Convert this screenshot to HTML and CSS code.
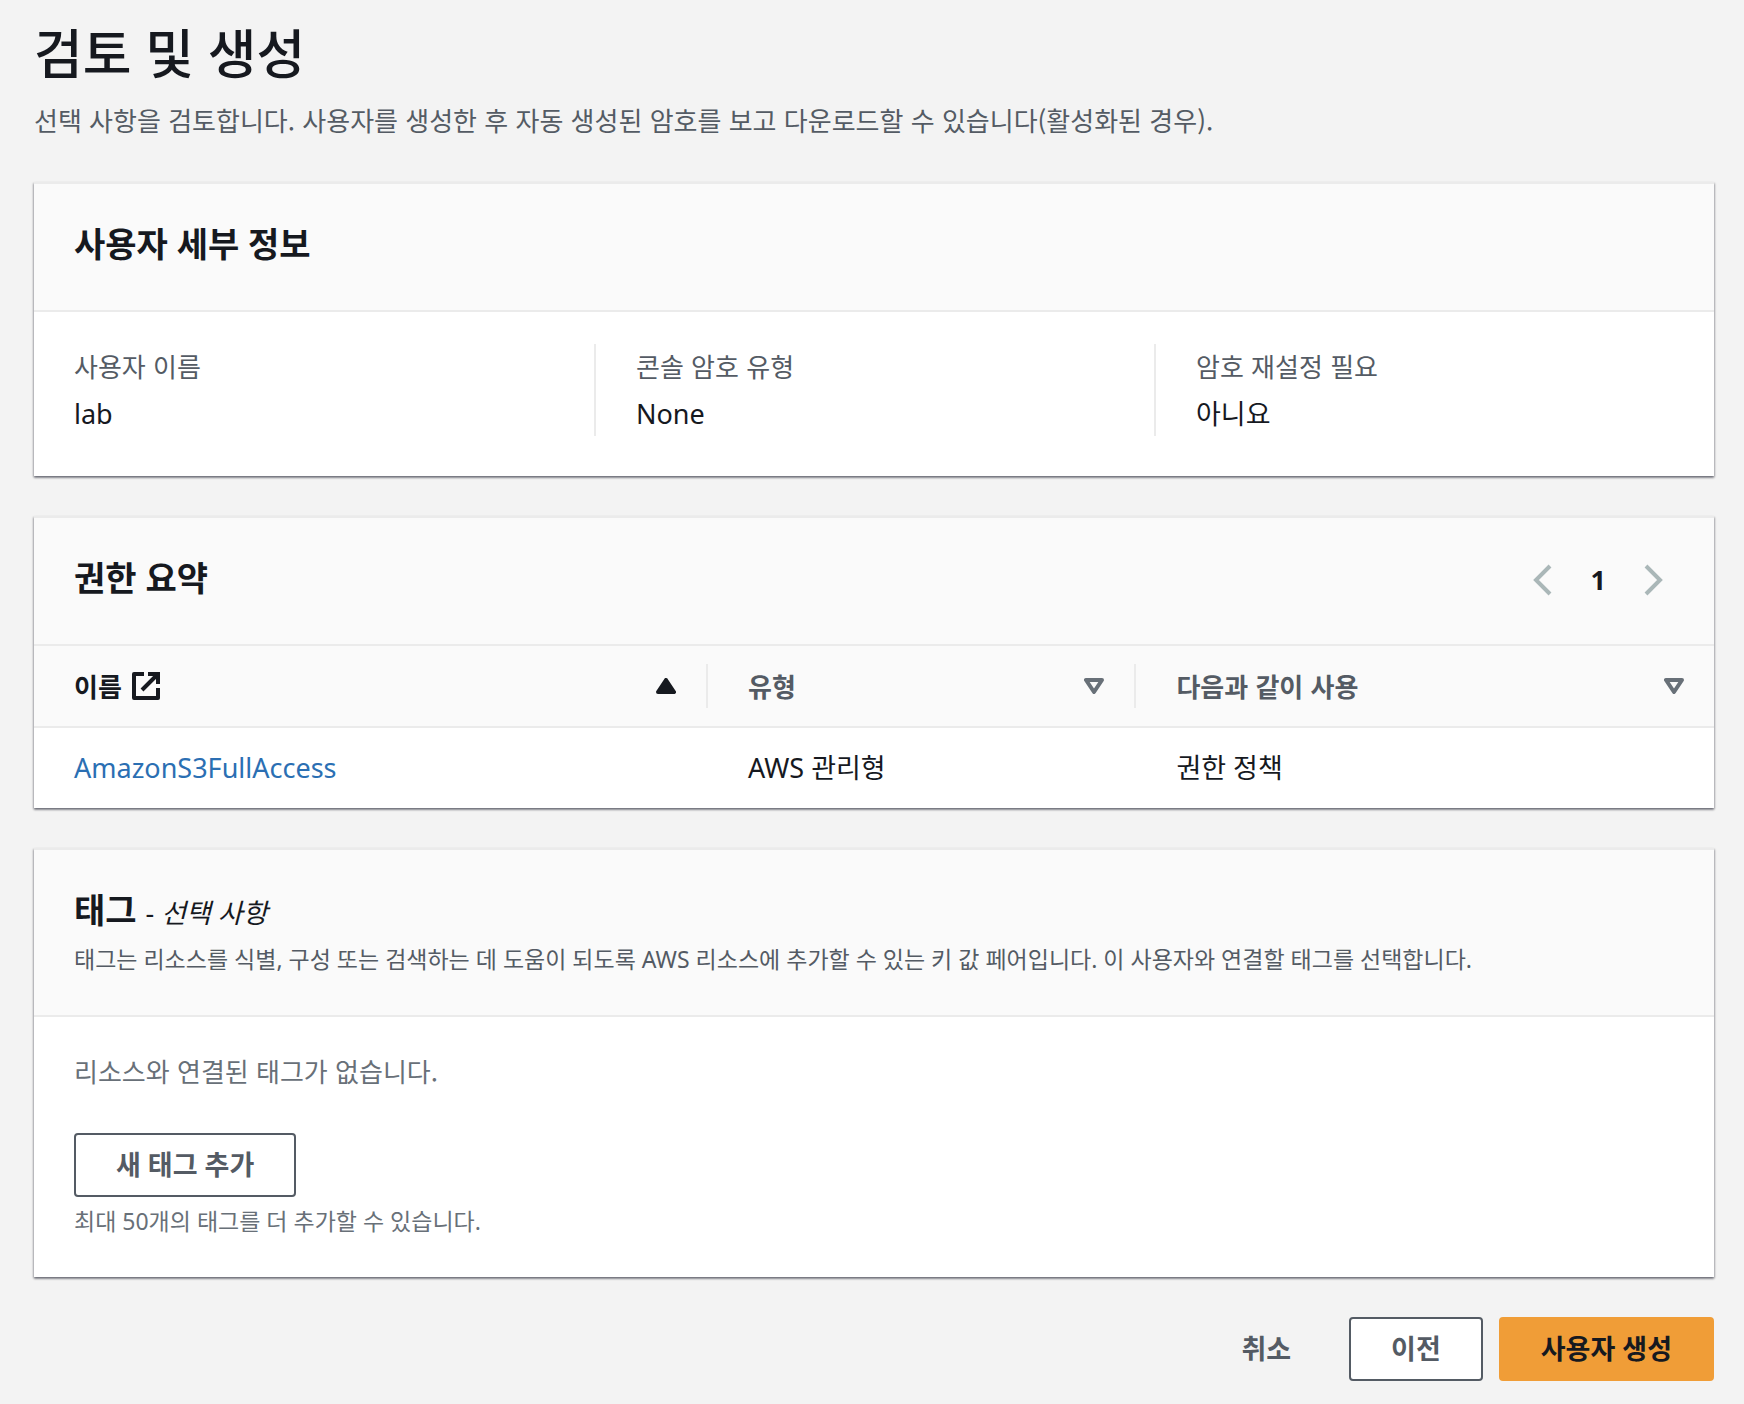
FILE: index.html
```html
<!DOCTYPE html>
<html lang="ko">
<head>
<meta charset="utf-8">
<meta name="viewport" content="width=device-width, initial-scale=1">
<title>검토 및 생성</title>
<link rel="stylesheet" href="styles.css">
</head>
<body>
<main class="page">
  <header class="page-header">
    <h1 class="page-title">검토 및 생성</h1>
    <p class="page-description">선택 사항을 검토합니다. 사용자를 생성한 후 자동 생성된 암호를 보고 다운로드할 수 있습니다(활성화된 경우).</p>
  </header>

  <section class="card" aria-labelledby="details-title">
    <div class="card-header">
      <h2 class="card-title" id="details-title">사용자 세부 정보</h2>
    </div>
    <dl class="details">
      <div class="detail">
        <dt>사용자 이름</dt>
        <dd>lab</dd>
      </div>
      <div class="detail">
        <dt>콘솔 암호 유형</dt>
        <dd>None</dd>
      </div>
      <div class="detail">
        <dt>암호 재설정 필요</dt>
        <dd>아니요</dd>
      </div>
    </dl>
  </section>

  <section class="card" aria-labelledby="permissions-title">
    <div class="card-header">
      <h2 class="card-title" id="permissions-title">권한 요약</h2>
      <nav class="pagination" aria-label="페이지">
        <button class="page-arrow" type="button" aria-label="이전 페이지" disabled>
          <svg width="20" height="32" viewBox="0 0 20 32" aria-hidden="true"><path d="M17 2 3 16l14 14"/></svg>
        </button>
        <button class="page-number" type="button" aria-current="page">1</button>
        <button class="page-arrow" type="button" aria-label="다음 페이지" disabled>
          <svg width="20" height="32" viewBox="0 0 20 32" aria-hidden="true"><path d="m2 2 14 14L2 30"/></svg>
        </button>
      </nav>
    </div>
    <table class="permissions">
      <thead>
        <tr>
          <th class="col-name sorted" scope="col" aria-sort="ascending">
            <button class="sort" type="button">
              <span class="sort-label">이름
                <svg class="external" width="28" height="28" viewBox="0 0 28 28" aria-hidden="true"><path d="M12 2H2v24h24V16"/><path class="arrow" d="M16 2h10v10M26 2 10 18"/></svg>
              </span>
              <svg class="sort-icon" width="20" height="16" viewBox="0 0 20 16" aria-hidden="true"><path class="solid" d="M10 2 18 14H2z"/></svg>
            </button>
          </th>
          <th class="col-type" scope="col">
            <button class="sort" type="button">
              <span class="sort-label">유형</span>
              <svg class="sort-icon" width="20" height="16" viewBox="0 0 20 16" aria-hidden="true"><path d="M2 2h16l-8 12z"/></svg>
            </button>
          </th>
          <th class="col-usage" scope="col">
            <button class="sort" type="button">
              <span class="sort-label">다음과 같이 사용</span>
              <svg class="sort-icon" width="20" height="16" viewBox="0 0 20 16" aria-hidden="true"><path d="M2 2h16l-8 12z"/></svg>
            </button>
          </th>
        </tr>
      </thead>
      <tbody>
        <tr>
          <td><a class="link" href="#">AmazonS3FullAccess</a></td>
          <td>AWS 관리형</td>
          <td>권한 정책</td>
        </tr>
      </tbody>
    </table>
  </section>

  <section class="card" aria-labelledby="tags-title">
    <div class="card-header card-header-stacked">
      <h2 class="card-title" id="tags-title">태그 <span class="optional">- <em>선택 사항</em></span></h2>
      <p class="card-description">태그는 리소스를 식별, 구성 또는 검색하는 데 도움이 되도록 AWS 리소스에 추가할 수 있는 키 값 페어입니다. 이 사용자와 연결할 태그를 선택합니다.</p>
    </div>
    <div class="tags-body">
      <p class="tags-empty">리소스와 연결된 태그가 없습니다.</p>
      <button class="button" type="button">새 태그 추가</button>
      <p class="tags-limit">최대 50개의 태그를 더 추가할 수 있습니다.</p>
    </div>
  </section>

  <footer class="actions">
    <button class="button button-link" type="button">취소</button>
    <button class="button" type="button">이전</button>
    <button class="button button-primary" type="button">사용자 생성</button>
  </footer>
</main>
</body>
</html>
```

FILE: styles.css
```css
* {
  box-sizing: border-box;
}

body {
  margin: 0;
  background: #f3f3f3;
  color: #16191f;
  font-family: "Noto Sans", "Noto Sans CJK KR", sans-serif;
  font-size: 27px;
  line-height: 44px;
}

h1, h2, p, dl, dd {
  margin: 0;
}

button {
  font: inherit;
  color: inherit;
  cursor: pointer;
}

.page {
  display: flex;
  flex-direction: column;
  gap: 40px;
  padding: 20px 30px 24px 34px;
}

.page-header {
  display: flex;
  flex-direction: column;
  gap: 10px;
}

.page-title {
  font-size: 53px;
  font-weight: 500;
  line-height: 68px;
}

.page-description,
.tags-empty,
.detail dt,
.sort-label {
  font-family: "Noto Sans CJK KR", "Noto Sans", sans-serif;
  font-size: 26px;
}

.page-description {
  color: #545b64;
}

.card {
  background: #fff;
  border-top: 2px solid #ebebeb;
  box-shadow: 0 2px 2px rgba(0, 7, 22, 0.35), 1px 1px 2px rgba(0, 7, 22, 0.2), -1px 1px 2px rgba(0, 7, 22, 0.2);
}

.card-header {
  display: flex;
  align-items: center;
  justify-content: space-between;
  padding: 36px 40px 42px;
  background: #fafafa;
  border-bottom: 2px solid #ebebeb;
}

.card-header-stacked {
  flex-direction: column;
  align-items: flex-start;
  gap: 2px;
  padding-bottom: 36px;
}

.card-title {
  font-size: 34px;
  font-weight: 700;
  line-height: 48px;
}

.optional {
  font-size: 27px;
  font-weight: 400;
}

.card-description,
.tags-limit {
  color: #545b64;
  font-size: 23px;
  line-height: 40px;
}

.details {
  display: grid;
  grid-template-columns: repeat(3, 1fr);
  padding: 32px 0 40px;
}

.detail {
  padding: 0 40px;
}

.detail + .detail {
  border-left: 2px solid #ebebeb;
}

.detail dt {
  color: #545b64;
}

.detail dd {
  padding: 4px 0 0;
}

.pagination {
  display: flex;
  align-items: center;
  gap: 38px;
  padding: 4px 10px 0 0;
}

.pagination button {
  display: flex;
  padding: 0;
  border: 0;
  background: none;
}

.pagination .page-number {
  font-weight: 700;
}

.page-arrow svg {
  fill: none;
  stroke: #aab7b8;
  stroke-width: 4;
}

.permissions {
  width: 100%;
  border-collapse: collapse;
  table-layout: fixed;
}

.col-name {
  width: 40%;
}

.col-type {
  width: 25.5%;
}

.permissions th {
  padding: 18px 0;
  background: #fafafa;
  border-bottom: 2px solid #ebebeb;
  color: #545b64;
}

.permissions th.sorted {
  color: #16191f;
}

.permissions td {
  padding: 18px 40px;
}

.permissions td + td {
  padding-left: 42px;
}

.sort {
  display: flex;
  align-items: center;
  justify-content: space-between;
  width: 100%;
  padding: 0 30px 0 40px;
  border: 0;
  background: none;
  font-weight: 700;
}

th + th .sort {
  border-left: 2px solid #ebebeb;
}

.sort-label {
  display: flex;
  align-items: center;
  gap: 10px;
}

.external {
  fill: none;
  stroke: currentColor;
  stroke-width: 4;
  stroke-linejoin: round;
}

.external .arrow {
  stroke-linejoin: miter;
}

.sort-icon {
  fill: none;
  stroke: #687078;
  stroke-width: 4;
  stroke-linejoin: round;
}

.sort-icon .solid {
  fill: #16191f;
  stroke: #16191f;
}

.link {
  color: #2b6fb3;
  text-decoration: none;
}

.tags-body {
  padding: 32px 40px 36px;
}

.tags-empty {
  padding-bottom: 40px;
  color: #687078;
}

.tags-limit {
  padding-top: 4px;
  color: #687078;
}

.button {
  padding: 8px 40px;
  border: 2px solid #545b64;
  border-radius: 4px;
  background: #fff;
  color: #545b64;
  font-weight: 700;
}

.button-link {
  border-color: transparent;
  background: transparent;
}

.button-primary {
  border-color: #f09d37;
  background: #f09d37;
  color: #16191f;
}

.actions {
  display: flex;
  justify-content: flex-end;
  gap: 16px;
}
```
